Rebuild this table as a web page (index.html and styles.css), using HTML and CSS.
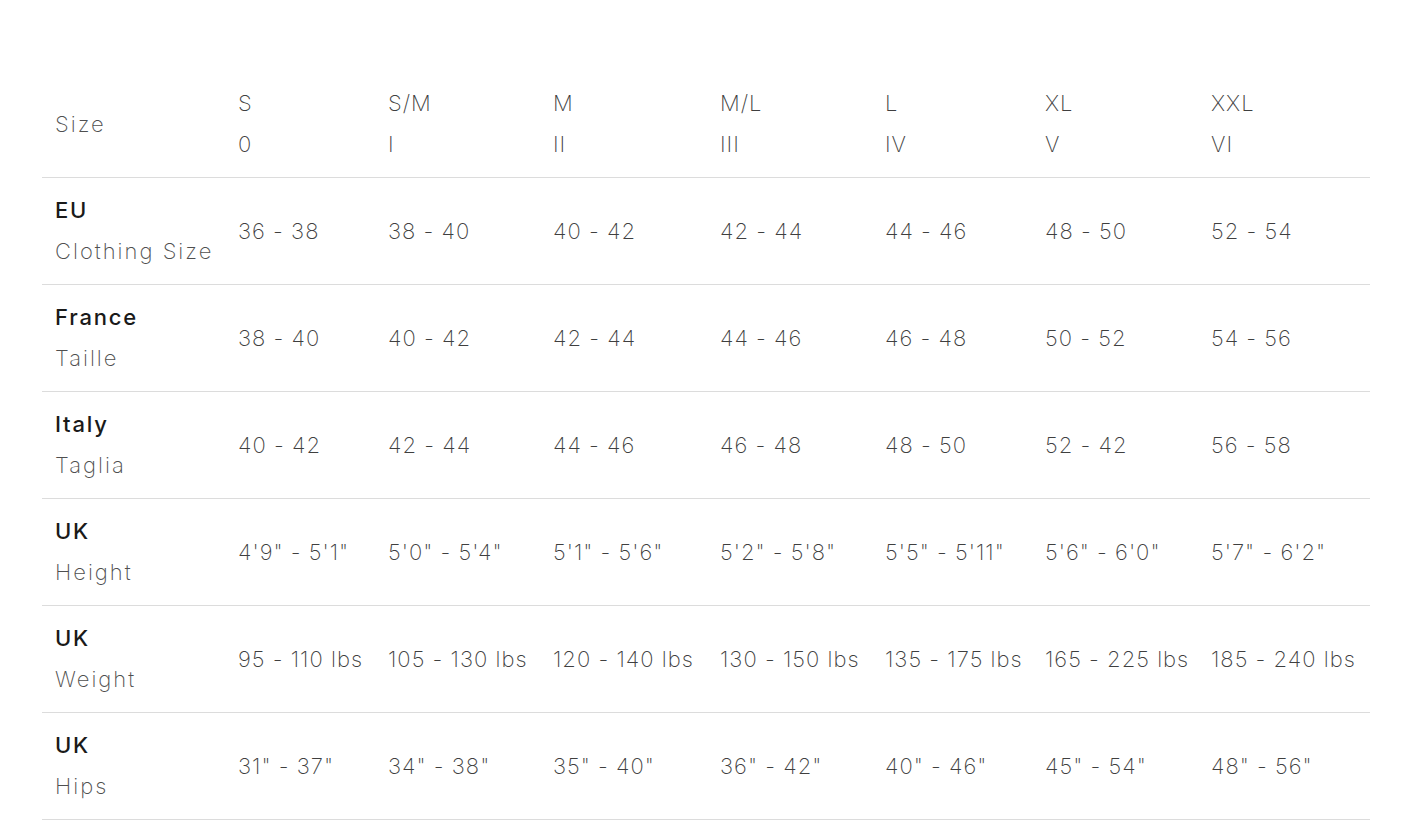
FILE: index.html
```html
<!DOCTYPE html>
<html lang="en">
<head>
<meta charset="utf-8">
<title>Size guide</title>
<link rel="stylesheet" href="styles.css">
</head>
<body>
<table class="size-table">
  <colgroup>
    <col class="c-label"><col class="c-s"><col class="c-sm"><col class="c-m"><col class="c-ml"><col class="c-l"><col class="c-xl"><col class="c-xxl">
  </colgroup>
  <tr class="head">
    <td class="label"><span class="sub">Size</span></td>
    <td>S<br>0</td>
    <td>S/M<br>I</td>
    <td>M<br>II</td>
    <td>M/L<br>III</td>
    <td>L<br>IV</td>
    <td>XL<br>V</td>
    <td>XXL<br>VI</td>
  </tr>
  <tr>
    <td class="label"><b>EU</b><br><span class="sub">Clothing Size</span></td>
    <td>36 - 38</td><td>38 - 40</td><td>40 - 42</td><td>42 - 44</td><td>44 - 46</td><td>48 - 50</td><td>52 - 54</td>
  </tr>
  <tr>
    <td class="label"><b>France</b><br><span class="sub">Taille</span></td>
    <td>38 - 40</td><td>40 - 42</td><td>42 - 44</td><td>44 - 46</td><td>46 - 48</td><td>50 - 52</td><td>54 - 56</td>
  </tr>
  <tr>
    <td class="label"><b>Italy</b><br><span class="sub">Taglia</span></td>
    <td>40 - 42</td><td>42 - 44</td><td>44 - 46</td><td>46 - 48</td><td>48 - 50</td><td>52 - 42</td><td>56 - 58</td>
  </tr>
  <tr>
    <td class="label"><b>UK</b><br><span class="sub">Height</span></td>
    <td>4'9" - 5'1"</td><td>5'0" - 5'4"</td><td>5'1" - 5'6"</td><td>5'2" - 5'8"</td><td>5'5" - 5'11"</td><td>5'6" - 6'0"</td><td>5'7" - 6'2"</td>
  </tr>
  <tr>
    <td class="label"><b>UK</b><br><span class="sub">Weight</span></td>
    <td>95 - 110 lbs</td><td>105 - 130 lbs</td><td>120 - 140 lbs</td><td>130 - 150 lbs</td><td>135 - 175 lbs</td><td>165 - 225 lbs</td><td>185 - 240 lbs</td>
  </tr>
  <tr>
    <td class="label"><b>UK</b><br><span class="sub">Hips</span></td>
    <td>31" - 37"</td><td>34" - 38"</td><td>35" - 40"</td><td>36" - 42"</td><td>40" - 46"</td><td>45" - 54"</td><td>48" - 56"</td>
  </tr>
</table>
</body>
</html>
```

FILE: styles.css
```css
html, body {
  margin: 0;
  padding: 0;
  background: #ffffff;
}

body {
  font-family: Inter, "Open Sans", "Liberation Sans", sans-serif;
  font-weight: 200;
  font-size: 22px;
  color: #3f3f3f;
}

.size-table {
  margin: 71px 0 0 42px;
  width: 1328px;
  border-collapse: collapse;
  table-layout: fixed;
}

.c-label { width: 183px; }
.c-s { width: 150px; }
.c-sm { width: 165px; }
.c-m { width: 167px; }
.c-ml { width: 165px; }
.c-l { width: 160px; }
.c-xl { width: 166px; }
.c-xxl { width: 172px; }

.size-table td {
  height: 106px;
  padding: 0 13px;
  border-bottom: 1px solid #dcdcdc;
  vertical-align: middle;
  line-height: 41px;
  white-space: nowrap;
  letter-spacing: 1px;
}

.label b {
  font-weight: 500;
  color: #1a1a1a;
  letter-spacing: 1.8px;
}

.label .sub {
  color: #4f4f4f;
  letter-spacing: 2px;
}
```
